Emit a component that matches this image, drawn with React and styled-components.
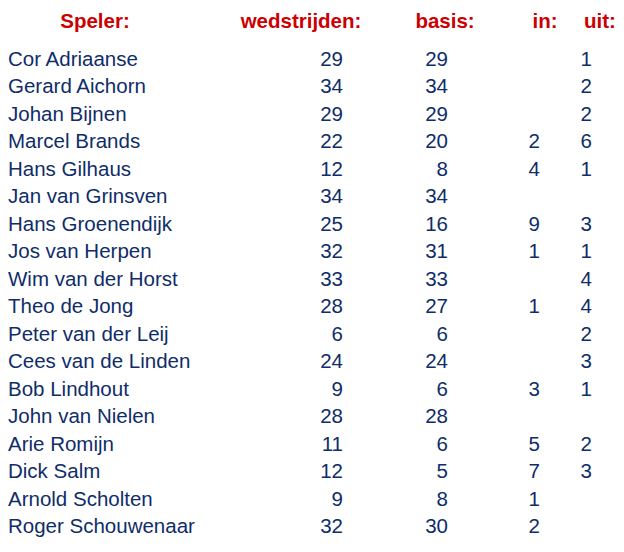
import React from "react";
import styled, { createGlobalStyle } from "styled-components";

const Global = createGlobalStyle`
  html, body { margin: 0; padding: 0; background: #ffffff; }
  body { font-family: "Liberation Sans", Arial, sans-serif; }
`;

const players = [
  ["Cor Adriaanse", 29, 29, "", 1],
  ["Gerard Aichorn", 34, 34, "", 2],
  ["Johan Bijnen", 29, 29, "", 2],
  ["Marcel Brands", 22, 20, 2, 6],
  ["Hans Gilhaus", 12, 8, 4, 1],
  ["Jan van Grinsven", 34, 34, "", ""],
  ["Hans Groenendijk", 25, 16, 9, 3],
  ["Jos van Herpen", 32, 31, 1, 1],
  ["Wim van der Horst", 33, 33, "", 4],
  ["Theo de Jong", 28, 27, 1, 4],
  ["Peter van der Leij", 6, 6, "", 2],
  ["Cees van de Linden", 24, 24, "", 3],
  ["Bob Lindhout", 9, 6, 3, 1],
  ["John van Nielen", 28, 28, "", ""],
  ["Arie Romijn", 11, 6, 5, 2],
  ["Dick Salm", 12, 5, 7, 3],
  ["Arnold Scholten", 9, 8, 1, ""],
  ["Roger Schouwenaar", 32, 30, 2, ""],
];

/* column layout: name | wedstrijden | basis | in | uit */
const columns = [
  { head: "Speler:", headPad: 58, numPad: 0 },
  { head: "wedstrijden:", headPad: 0, numPad: 19 },
  { head: "basis:", headPad: 0, numPad: 80 },
  { head: "in:", headPad: 0, numPad: 22 },
  { head: "uit:", headPad: 0, numPad: 46 },
];

const Table = styled.div`
  padding: 7px 0 0 8px;
  width: 616px;
  box-sizing: border-box;
`;

const Row = styled.div`
  display: grid;
  grid-template-columns: 232px 122px 166px 34px 76px;
  font-size: 20.5px;
  line-height: 27.5px;
  white-space: nowrap;
`;

const HeadRow = styled(Row)`
  margin-bottom: 10px;
`;

const HeadCell = styled.div`
  color: #cc0000;
  font-weight: bold;
  text-align: center;
  padding-right: ${(p) => p.$pad}px;
`;

const NameCell = styled.div`
  color: #0f2d69;
`;

const NumCell = styled.div`
  color: #0f2d69;
  text-align: right;
  padding-right: ${(p) => p.$pad}px;
`;

export default function App() {
  return (
    <>
      <Global />
      <Table>
        <HeadRow>
          {columns.map((c) => (
            <HeadCell key={c.head} $pad={c.headPad}>
              {c.head}
            </HeadCell>
          ))}
        </HeadRow>
        {players.map((p) => (
          <Row key={p[0]}>
            <NameCell>{p[0]}</NameCell>
            {p.slice(1).map((v, i) => (
              <NumCell key={i} $pad={columns[i + 1].numPad}>
                {v}
              </NumCell>
            ))}
          </Row>
        ))}
      </Table>
    </>
  );
}
